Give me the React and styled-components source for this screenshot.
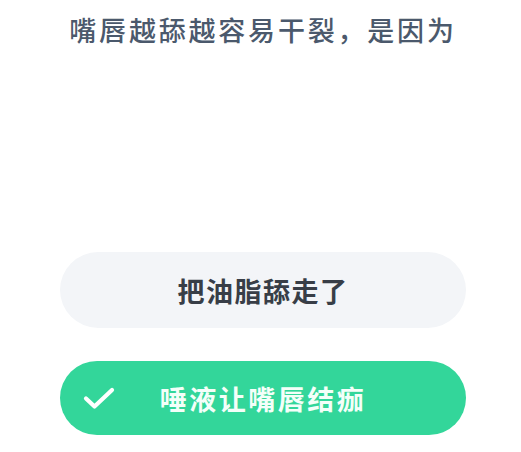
import React from 'react'
import styled, { createGlobalStyle } from 'styled-components'

const Global = createGlobalStyle`
  html, body {
    margin: 0;
    padding: 0;
    background: #ffffff;
  }
  body {
    font-family: "Noto Sans CJK SC", "Noto Sans", sans-serif;
  }
`

const Page = styled.div`
  width: 521px;
  height: 452px;
  display: flex;
  flex-direction: column;
  align-items: center;
  box-sizing: border-box;
  padding: 10px 0 0 5px;
`

const Question = styled.h1`
  margin: 0;
  font-size: 27px;
  line-height: 40px;
  font-weight: 500;
  letter-spacing: 2.8px;
  color: #4b596c;
  text-align: center;
`

const Options = styled.div`
  display: flex;
  flex-direction: column;
  gap: 33px;
  margin-top: 202px;
  width: 406px;
`

const Option = styled.button`
  position: relative;
  height: ${p => (p.$correct ? 74 : 76)}px;
  border: none;
  border-radius: 38px;
  background: ${p => (p.$correct ? '#33d69a' : '#f3f5f8')};
  color: ${p => (p.$correct ? '#f4fff9' : '#383e47')};
  font-family: inherit;
  font-size: 27px;
  font-weight: 700;
  letter-spacing: ${p => (p.$correct ? 2.5 : 1.5)}px;
  display: flex;
  align-items: center;
  justify-content: center;
  padding: 0;
`

const Check = styled.svg`
  position: absolute;
  left: 23px;
  top: 50%;
  transform: translateY(-50%);
`

export default function App() {
  return (
    <>
      <Global />
      <Page>
        <Question>嘴唇越舔越容易干裂，是因为</Question>
        <Options>
          <Option>把油脂舔走了</Option>
          <Option $correct>
            <Check width="32" height="24" viewBox="0 0 32 24">
              <path d="M3 12.5 L11.5 20.5 L29 4" fill="none" stroke="#ffffff" strokeWidth="4.2" strokeLinecap="round" strokeLinejoin="round" />
            </Check>
            唾液让嘴唇结痂
          </Option>
        </Options>
      </Page>
    </>
  )
}
